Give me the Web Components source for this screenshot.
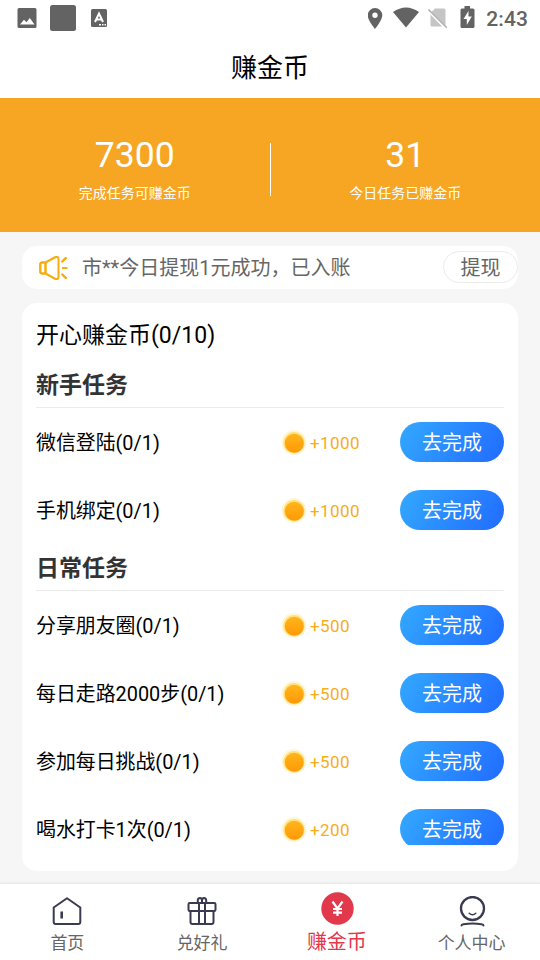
<!DOCTYPE html>
<html lang="zh-CN">
<head>
<meta charset="utf-8">
<title>赚金币</title>
<style>
html,body{margin:0;height:100%;}
body{font-family:Roboto,"Noto Sans CJK SC",sans-serif;background:#f6f6f6;overflow:hidden;}
</style>
</head>
<body>
<coin-app></coin-app>
<script>
function define(name, html, fill) {
  const template = document.createElement('template');
  template.innerHTML = html;
  customElements.define(name, class extends HTMLElement {
    constructor() {
      super();
      this.attachShadow({mode: 'open'}).append(template.content.cloneNode(true));
    }
    connectedCallback() { if (fill) fill(this, this.shadowRoot); }
  });
}

define('status-bar', `
<style>
:host{display:flex;align-items:center;justify-content:space-between;height:36px;padding:0 12px 0 17px;background:#fff;color:#636363}
div{display:flex;align-items:center}
svg{display:block;fill:#636363}
.left{gap:13px}
span{font:500 21px/36px Roboto,sans-serif;letter-spacing:.1px;padding-top:2px}
</style>
<div class="left">
<svg width="20" height="20" viewBox="0 0 20 20"><path fill-rule="evenodd" d="M2 0h16q1.500 0 1.500 1.500v17q0 1.500-1.500 1.500H2q-1.500 0-1.500-1.500v-17Q.5 0 2 0zM3 16.500h14.500L12.800 10 9.500 14.200 7 11.800z"/></svg>
<svg width="26" height="26"><rect width="26" height="26" rx="2.500"/></svg>
<svg width="16" height="18" viewBox="0 0 16 18" style="margin-left:2px"><rect width="16" height="18" rx="1.500"/><path d="M4 13 8 4.500 12 13M5.500 10.500h5" fill="none" stroke="#fff" stroke-width="2"/><path d="M8 15h2v1.500H8zm3 0h1.500v1.500H11zm2.500 0H15v1.500h-1.500z" fill="#fff"/></svg>
</div>
<div>
<svg width="15" height="21" viewBox="0 0 15 21" style="margin-right:-1px"><path fill-rule="evenodd" d="M7 0a7.300 7.300 0 0 1 7.300 7.300C14.300 12.500 7 21 7 21S-.3 12.500-.3 7.300A7.300 7.300 0 0 1 7 0zm0 4.600a2.700 2.700 0 1 0 0 5.400 2.700 2.700 0 0 0 0-5.400z"/></svg>
<svg width="26" height="21" viewBox="0 0 26 21" style="margin:-1px 0 0 11px"><path d="M0 5Q13-4 26 5L13 20.500z"/></svg>
<svg width="20" height="21" viewBox="0 0 20 21" style="margin-left:9px"><path d="M7 .5h9q1.500 0 1.500 1.500V17q0 1.500-1.500 1.500H4q-1.500 0-1.500-1.500V5z" fill="#c5c5c5"/><path d="M0 2.500 17.500 20.500" stroke="#fff" stroke-width="2"/><path d="M.5 1.500 18.800 19.800" stroke="#b4b4b4" stroke-width="1.600"/></svg>
<svg width="15" height="22" viewBox="0 0 15 22" style="margin:-2px 11px 0 12px"><path fill-rule="evenodd" d="M4.500 0h5.500v2.500h3q1.500 0 1.500 1.500v16.500q0 1.500-1.500 1.500H2Q.5 22 .5 20.500V4Q.5 2.500 2 2.500h2.500zM8.500 5 3.500 13h3.300v6l5-8.500H8.500z"/></svg>
<span>2:43</span>
</div>`);

define('title-bar', `
<style>:host{display:block;height:62px;background:#fff;color:#000;text-align:center;font-size:26px;line-height:64px}</style><slot></slot>`);

define('stat-item', `
<style>
:host{flex:1;display:flex;flex-direction:column;align-items:center;color:#fff}
b{font-weight:400;font-size:35.500px;line-height:42px}
slot{display:block;font-size:14px;line-height:20px;margin-top:7px}
</style><b></b><slot></slot>`, (el, r) => { r.querySelector('b').textContent = el.getAttribute('value'); });

define('stat-banner', `
<style>
:host{display:flex;align-items:flex-start;height:134px;box-sizing:border-box;padding-top:36px;background:#f6a623}
i{width:1px;height:53px;margin-top:9px;background:#fff}
</style>
<stat-item value="7300">完成任务可赚金币</stat-item><i></i><stat-item value="31">今日任务已赚金币</stat-item>`);

define('notice-bar', `
<style>
:host{display:flex;align-items:center;height:43px;margin:14px 22px 0;border-radius:15px;background:#fff;color:#666;font-size:20px}
svg{margin-left:17px;margin-right:14px}
p{margin:0;flex:1;line-height:43px;padding-top:2px}
button{box-sizing:border-box;width:75px;height:32px;border:1.500px solid #ececec;border-radius:16px;background:#fff;color:#666;font:inherit;line-height:29px;padding:2px 0 0;margin-top:-1px}
</style>
<svg width="29" height="24" viewBox="0 0 29 24" fill="none" stroke="#f8ac10" stroke-width="2" stroke-linecap="round" stroke-linejoin="round"><path d="M6.500 6.500 16.500 1q3-.6 3 2v18q0 2.600-3 2L6.500 17.500zH3Q1.300 6.500 1.300 8.500v7q0 2 1.700 2h3.500M23.300 5.500l3.500-3.500M24 12h3.500M23.300 18.500l3.500 3.500"/><path d="M6.500 6.500v11M6.500 6.500H3Q1.300 6.500 1.300 8.500v7q0 2 1.700 2h3.500M23.300 5.500l3.500-3.500M24 12h3.500M23.300 18.500l3.500 3.500"/></svg>
<p>市**今日提现1元成功，已入账</p><button>提现</button>`);

define('task-section', `
<style>:host{display:block}h3{margin:0;height:46px;line-height:49px;font-size:23px;font-weight:700;color:#333;border-bottom:1px solid #ececec}</style><h3></h3><slot></slot>`,
(el, r) => { r.querySelector('h3').textContent = el.getAttribute('label'); });

define('coin-reward', `
<style>
:host{display:flex;align-items:center;gap:3px;width:119px;color:#f5ad1b;font-size:17px;letter-spacing:.4px;line-height:24px}
svg{display:block}
</style>
<svg width="26" height="26" viewBox="0 0 26 26"><defs><linearGradient id="g" x2="0" y2="1"><stop stop-color="#ffb51b"/><stop offset="1" stop-color="#ff9908"/></linearGradient></defs><circle cx="13" cy="12.500" r="12.500" fill="#fff6da"/><circle cx="13" cy="12.800" r="10.700" fill="#ffe27c"/><circle cx="13.300" cy="13.300" r="9.500" fill="url(#g)"/></svg><slot></slot>`);

define('task-row', `
<style>
:host{display:flex;align-items:center;height:68px;color:#000;font-size:19.900px}
span{flex:1;line-height:28px;padding-top:4px}
button{width:104px;height:40px;border:0;border-radius:20px;background:linear-gradient(120deg,#33a9ff,#216bff);color:#fff;font:inherit;font-size:20px;line-height:38px;padding:2px 0 0}
coin-reward{margin-top:2px}
</style><span><slot></slot></span><coin-reward></coin-reward><button>去完成</button>`,
(el, r) => { r.querySelector('coin-reward').textContent = '+' + el.getAttribute('coins'); });

define('task-card', `
<style>
:host{display:block;box-sizing:border-box;height:568px;margin:14px 22px 0;padding:10px 14px 26px;border-radius:15px;background:#fff}
h2{margin:0;font-weight:400;font-size:23px;height:48px;line-height:45px;color:#000}
.list{height:484px;overflow:hidden}
</style>
<h2>开心赚金币(0/10)</h2>
<div class="list">
<task-section label="新手任务"><task-row coins="1000">微信登陆(0/1)</task-row><task-row coins="1000">手机绑定(0/1)</task-row></task-section>
<task-section label="日常任务"><task-row coins="500">分享朋友圈(0/1)</task-row><task-row coins="500">每日走路2000步(0/1)</task-row><task-row coins="500">参加每日挑战(0/1)</task-row><task-row coins="200">喝水打卡1次(0/1)</task-row></task-section>
</div>`);

define('nav-item', `
<style>
:host{flex:1;display:flex;flex-direction:column;align-items:center;padding-top:12px;color:#666;font-size:17px;line-height:24px}
:host([active]){padding-top:7px;color:#e2384b;font-size:20px;line-height:28px}
slot[name=icon]{display:block;height:35px}
:host([active]) slot[name=icon]{height:37px}
</style><slot name="icon"></slot><div><slot></slot></div>`);

define('nav-bar', `
<style>
:host{display:flex;height:76px;box-sizing:border-box;padding-right:1px;background:#fff;box-shadow:0 -1px 2px #e4e4e4}
svg{display:block;fill:none;stroke:#3a3a50;stroke-width:2;stroke-linecap:round;stroke-linejoin:round}
</style>
<nav-item><svg slot="icon" width="30" height="30" viewBox="0 0 30 30"><path d="M1.700 11.500 15 2.300l13.300 9.200V26q0 2-2 2H3.700q-2 0-2-2z"/><path d="M9.700 15.500v7" stroke-width="2.600" stroke-linecap="butt"/></svg>首页</nav-item>
<nav-item><svg slot="icon" width="30" height="30" viewBox="0 0 30 30"><rect x="1.500" y="7" width="27" height="8" rx="1.200"/><path d="M3.500 15v11q0 2 2 2h19q2 0 2-2V15M12 7v21M18 7v21M10.800 6.500V4.500q0-2.500 2.200-2.500 2 0 2 2.500 0-2.500 2-2.500 2.200 0 2.200 2.500v2M15 4v3"/></svg>兑好礼</nav-item>
<nav-item active><svg slot="icon" width="34" height="34" viewBox="0 0 34 34"><circle cx="17.500" cy="17.500" r="16.200" fill="#e2384b" stroke="none"/><path d="m12.500 10.500 5 7 5-7M17.500 17.500V25M13 18h9M13 21.700h9" stroke="#fff" stroke-width="2.200" stroke-linecap="butt"/></svg>赚金币</nav-item>
<nav-item><svg slot="icon" width="30" height="31" viewBox="0 0 30 31"><circle cx="15.500" cy="12.500" r="11.500" stroke-width="2.300"/><path d="M12.200 17.200q3.300 3 6.600 0" stroke-width="1.500"/><path d="M4.500 29.500q0-1 2-1.300 9-1.500 18 0 2 .3 2 1.300"/></svg>个人中心</nav-item>`);

define('coin-app', `
<style>:host{display:flex;flex-direction:column;width:540px;height:960px;background:#f6f6f6}nav-bar{margin-top:auto}</style>
<status-bar></status-bar><title-bar>赚金币</title-bar><stat-banner></stat-banner><notice-bar></notice-bar><task-card></task-card><nav-bar></nav-bar>`);
</script>
</body>
</html>
